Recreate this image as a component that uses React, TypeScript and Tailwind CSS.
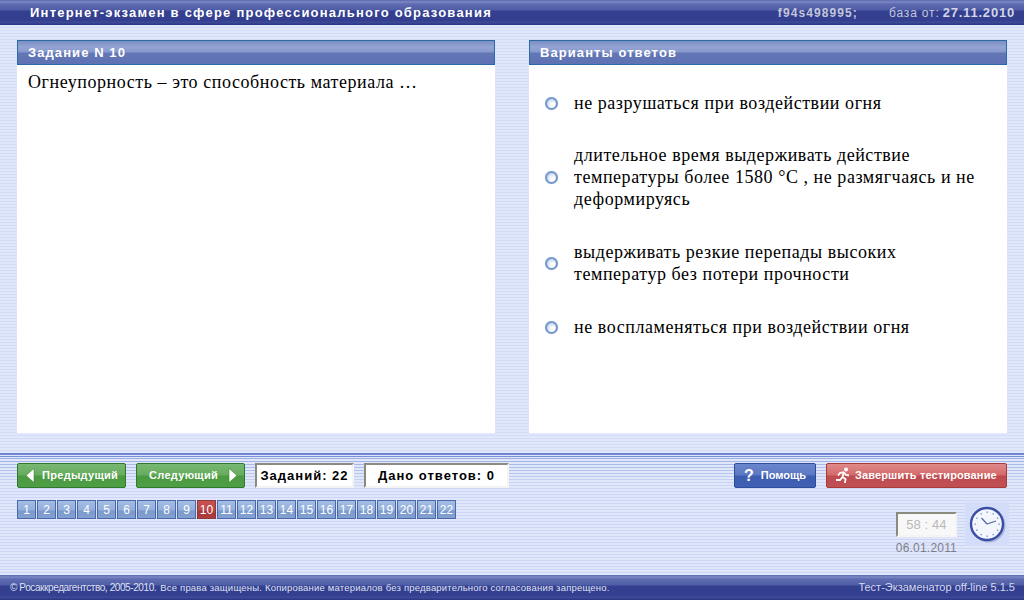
const pages = Array.from({ length: 22 }, (_, i) => i + 1);

const answers = [
  "не разрушаться при воздействии огня",
  "длительное время выдерживать действие температуры более 1580 °С , не размягчаясь и не деформируясь",
  "выдерживать резкие перепады высоких температур без потери прочности",
  "не воспламеняться при воздействии огня",
];

const sans = "font-['Liberation_Sans',Arial,sans-serif]";
const serif = "font-['Liberation_Serif','Times_New_Roman',serif]";
const barBg =
  "bg-[linear-gradient(#5a68ae_0px,#7c88c4_2px,#5f6cb2_4px,#4f5da6_10px,#343f90_11px,#343f90_21px,#3f4d9b_22px,#2a3580_25px)]";
const panelHead =
  "bg-[linear-gradient(#7c8fc5_0px,#93a3d3_6px,#8799cc_11px,#6376b6_12px,#5e72b3_24px)] border border-[#2c6aa5]";

function PanelHeader({ title }: { title: string }) {
  return (
    <div className={`h-[25px] flex items-center pl-[10px] text-white text-[13px] font-bold tracking-[1.08px] ${panelHead}`}>
      {title}
    </div>
  );
}

function Radio() {
  return (
    <span className="w-[13px] h-[13px] shrink-0 rounded-full border-2 border-[#7397cc] shadow-[0_0_1px_#9db4d8] bg-[radial-gradient(circle_at_65%_70%,#ffffff_20%,#dfe7f5_55%,#aebfde_95%)]" />
  );
}

function Arrow({ left }: { left?: boolean }) {
  return (
    <svg width="10" height="15" viewBox="0 0 10 15" className="shrink-0">
      <path d={left ? "M9 0.5V14.5L1 7.5Z" : "M1 0.5V14.5L9 7.5Z"} fill="#fff" stroke="#2f7a2a" strokeWidth="0.5" />
    </svg>
  );
}

function Runner() {
  return (
    <svg width="16" height="17" viewBox="0 0 16 17" className="shrink-0">
      <circle cx="11" cy="2.5" r="2" fill="#fff" />
      <path d="M9 5 L5 6 L3 8.5 M9 5 L7.5 10 L10.5 12 L10 16 M7.5 10 L5 13 L1 13 M9 5.5 L11 8 L14 8.5" fill="none" stroke="#fff" strokeWidth="1.8" />
    </svg>
  );
}

const ticks = Array.from({ length: 12 }, (_, i) => (i * Math.PI) / 6);

function Clock() {
  return (
    <svg width="44" height="44" viewBox="0 0 44 44">
      <rect width="44" height="44" fill="#d3dcf8" />
      <circle cx="23.5" cy="23.5" r="17" fill="#8d99c4" opacity="0.6" />
      <circle cx="22" cy="22" r="16" fill="#f3f6fd" stroke="#3a4ea6" strokeWidth="2.4" />
      {ticks.map((t) => (
        <rect
          key={t}
          x={21.5 + Math.sin(t) * 12}
          y={21.5 - Math.cos(t) * 12}
          width="1.4"
          height="1.4"
          fill="#8094cc"
        />
      ))}
      <path d="M22 22 L16.5 16 M22 22 L31 19" stroke="#55669f" strokeWidth="1.2" fill="none" />
    </svg>
  );
}

export default function App() {
  return (
    <div className={`w-[1024px] h-[600px] overflow-hidden flex flex-col ${sans} bg-[repeating-linear-gradient(#d3dcf8_0px,#d3dcf8_1px,#e1e7fb_1px,#e1e7fb_3px)]`}>
      <header className={`h-[25px] shrink-0 flex items-center justify-between pl-[30px] pr-[9px] ${barBg}`}>
        <span className="text-white text-[13px] font-bold tracking-[1.22px]">
          Интернет-экзамен в сфере профессионального образования
        </span>
        <span className="flex items-baseline text-[#c3c7da] text-[12px]">
          <b className="tracking-[1.1px]">f94s498995;</b>
          <span className="ml-[31px] tracking-[0.85px]">база от:</span>
          <b className="ml-[3px] text-[13px] tracking-[0.8px] text-[#d3d6e6]">27.11.2010</b>
        </span>
      </header>

      <main className="flex justify-between px-[17px] pt-[15px]">
        <section className="w-[478px] h-[393px] bg-white flex flex-col">
          <PanelHeader title="Задание N 10" />
          <p className={`pl-[11px] pt-[6px] text-[18px] tracking-[0.55px] leading-[22px] text-black ${serif}`}>
            Огнеупорность – это способность материала …
          </p>
        </section>
        <section className="w-[478px] h-[393px] bg-white flex flex-col">
          <PanelHeader title="Варианты ответов" />
          <div className={`pl-[16px] pt-[27px] flex flex-col gap-[31px] text-[18px] tracking-[0.55px] leading-[22px] text-black ${serif}`}>
            {answers.map((a) => (
              <label key={a} className="flex items-center gap-[16px] first:mb-[-1px]">
                <Radio />
                <span className="w-[402px]">{a}</span>
              </label>
            ))}
          </div>
        </section>
      </main>

      <div className="mt-[20px] h-[5px] shrink-0 bg-[linear-gradient(#6f85cf_0px,#6f85cf_2px,#dfe5fa_2px,#dfe5fa_3px,#7a90d6_3px,#7a90d6_4px,#dfe5fa_4px,#dfe5fa_5px)]" />

      <div className="flex-1 flex justify-between px-[17px] pt-[5px] bg-[linear-gradient(rgba(225,231,251,0)_0px,rgba(225,231,251,0.7)_26px),repeating-linear-gradient(#9cafe4_0px,#9cafe4_1px,#e1e7fb_1px,#e1e7fb_3px)]">
        <div>
          <div className="flex items-stretch h-[25px]">
            <button className="w-[109px] flex items-center gap-[7px] pl-[7px] rounded-[2px] border border-[#2f7a2a] bg-[linear-gradient(#79b873_0px,#66ac5e_11px,#4b9a42_12px,#4f9f46_25px)] text-white text-[11px] font-bold tracking-[0.3px]">
              <Arrow left />
              Предыдущий
            </button>
            <button className="ml-[10px] w-[109px] flex items-center gap-[10px] pl-[12px] rounded-[2px] border border-[#2f7a2a] bg-[linear-gradient(#79b873_0px,#66ac5e_11px,#4b9a42_12px,#4f9f46_25px)] text-white text-[11px] font-bold tracking-[0.3px]">
              Следующий
              <Arrow />
            </button>
            <span className="ml-[10px] w-[99px] flex items-center justify-center bg-white border-2 border-t-[#8a8a7e] border-l-[#8a8a7e] border-r-[#f4f4f4] border-b-[#f4f4f4] text-black text-[13px] font-bold tracking-[1px]">
              Заданий: 22
            </span>
            <span className="ml-[10px] w-[145px] flex items-center justify-center bg-white border-2 border-t-[#8a8a7e] border-l-[#8a8a7e] border-r-[#f4f4f4] border-b-[#f4f4f4] text-black text-[13px] font-bold tracking-[1px]">
              Дано ответов: 0
            </span>
          </div>
          <div className="flex gap-px mt-[12px]">
            {pages.map((n) => (
              <span
                key={n}
                className={
                  n === 10
                    ? "w-[19px] h-[19px] flex items-center justify-center text-white text-[12px] border border-[#8f3a3a] bg-[linear-gradient(#c85050_0px,#c04a4a_9px,#a83838_10px,#b04040_19px)]"
                    : "w-[19px] h-[19px] flex items-center justify-center text-white text-[12px] border border-[#4b68ad] bg-[linear-gradient(#a3bde2_0px,#93afdb_9px,#7a9acb_10px,#86a3d2_19px)]"
                }
              >
                {n}
              </span>
            ))}
          </div>
        </div>

        <div className="flex flex-col items-end">
          <div className="flex h-[25px]">
            <button className="w-[82px] flex items-center gap-[7px] pl-[9px] rounded-[2px] border border-[#2e4c9c] bg-[linear-gradient(#6a86cc_0px,#5b78c2_11px,#3c5cb0_12px,#4262b5_25px)] text-white text-[11px] font-bold">
              <span className="text-[16px] leading-none">?</span>
              Помощь
            </button>
            <button className="ml-[10px] w-[181px] flex items-center gap-[4px] pl-[8px] rounded-[2px] border border-[#a83a3a] bg-[linear-gradient(#df8a8a_0px,#d46a6a_11px,#bd4a4f_12px,#c25258_25px)] text-white text-[11px] font-bold tracking-[0.13px]">
              <Runner />
              Завершить тестирование
            </button>
          </div>
          <div className="flex mt-[15px] mr-[-2px]">
            <div className="flex flex-col items-center">
              <span className="mt-[9px] w-[61px] h-[25px] flex items-center justify-center bg-[#f8f8f8] border-2 border-t-[#8a8a7e] border-l-[#8a8a7e] border-r-[#f4f4f4] border-b-[#f4f4f4] text-[#b8b8b8] text-[13px] tracking-[0.1px]">
                58 : 44
              </span>
              <span className="mt-[2px] text-[#7c7f88] text-[12px] tracking-[0.2px]">06.01.2011</span>
            </div>
            <div className="ml-[8px] mt-[-1px]">
              <Clock />
            </div>
          </div>
        </div>
      </div>

      <footer className={`h-[25px] shrink-0 flex items-center justify-between pl-[10px] pr-[9px] ${barBg}`}>
        <span className="flex items-baseline text-[#dfe2f2]">
          <span className="text-[10px] tracking-[-0.4px]">© Росаккредагентство, 2005-2010.</span>
          <span className="ml-[4px] text-[9.5px] tracking-[0.2px]">
            Все права защищены. Копирование материалов без предварительного согласования запрещено.
          </span>
        </span>
        <span className="text-[#d5d9ee] text-[11px]">Тест-Экзаменатор off-line 5.1.5</span>
      </footer>
    </div>
  );
}
